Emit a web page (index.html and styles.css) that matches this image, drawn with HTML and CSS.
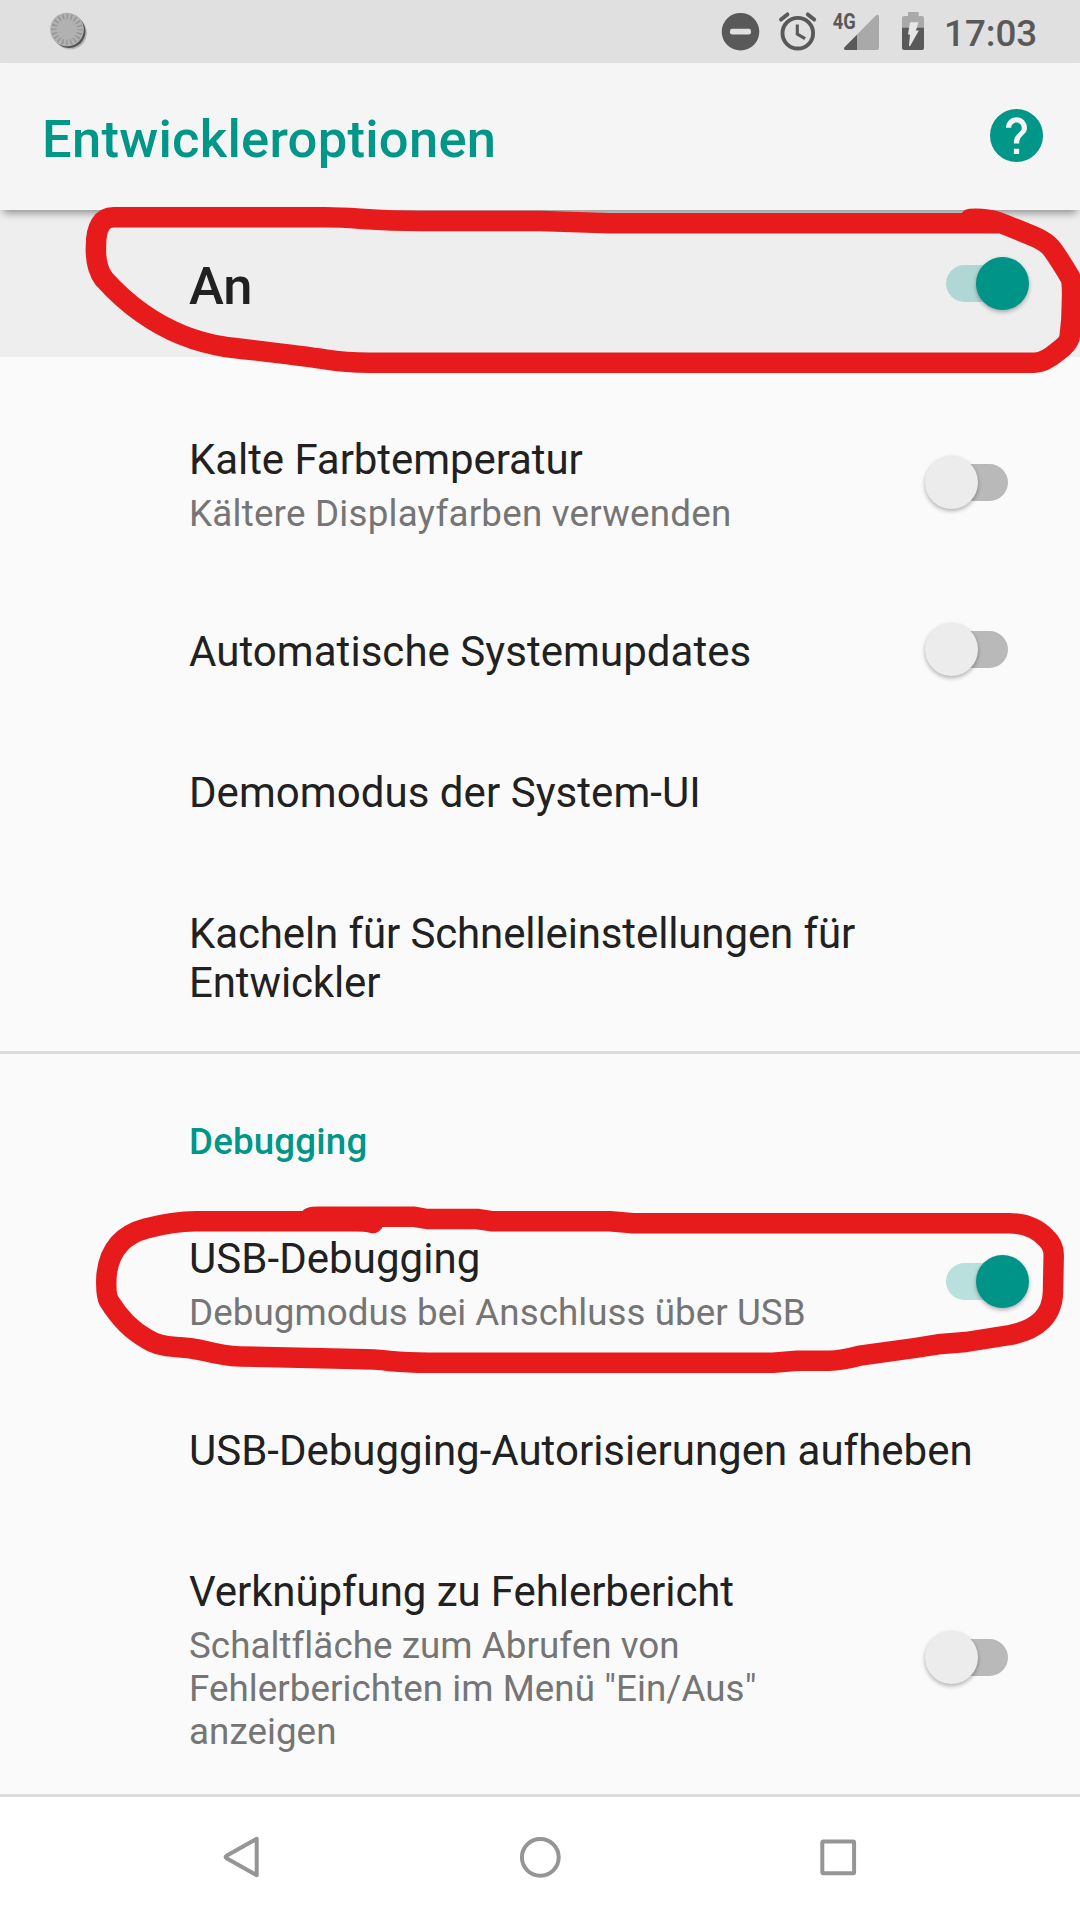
FILE: index.html
```html
<!DOCTYPE html>
<html lang="de">
<head>
<meta charset="utf-8">
<title>Entwickleroptionen</title>
<link rel="stylesheet" href="styles.css">
</head>
<body>
<div class="screen">
  <div class="status-bar">
    <svg class="app-icon" width="40" height="63" viewBox="46 0 40 63">
      <circle cx="67.500" cy="33" r="16.5" fill="#b9b9b9"/>
      <circle cx="66" cy="31.500" r="16.5" fill="#555"/>
      <circle cx="64" cy="29.500" r="16.8" fill="#b1b1b1"/>
      <circle cx="64" cy="29.500" r="13" fill="none" stroke="#959595" stroke-width="5.500" stroke-dasharray="1.4 2.684" stroke-dashoffset="0.7"/>
    </svg>
    <div class="status-icons">
      <svg width="48" height="63" viewBox="720 0 48 63">
        <circle cx="740.500" cy="31.700" r="18.8" fill="#595959"/>
        <rect x="730" y="28.800" width="21" height="5.600" rx="2.200" fill="#e0e0e0"/>
      </svg>
      <svg width="60" height="63" viewBox="768 0 60 63" fill="none" stroke="#595959" stroke-width="3.900">
        <circle cx="797.800" cy="33.200" r="15.300"/>
        <path d="M797.300 24.500V34l7.800 4.600" stroke-width="3.100"/>
        <path d="M781 19.600l6.400-5.200M814.200 19.600l-6.400-5.200" stroke-linecap="round"/>
      </svg>
      <svg width="68" height="63" viewBox="828 0 68 63">
        <path d="M844.800 47l31-31.400q3.200-2.200 3.200 1.400V48q0 2-2 2h-31q-3.400-.4-1.200-3z" fill="#a9a9a9"/>
        <path d="M844.800 47L857 34.700V50h-11q-3.400-.4-1.200-3z" fill="#595959"/>
        <text class="network" x="832.700" y="29.400" textLength="23" lengthAdjust="spacingAndGlyphs">4G</text>
      </svg>
      <svg width="40" height="63" viewBox="896 0 40 63">
        <path d="M908 12h10.600v4h3.400q2 0 2 2v10h-22V18q0-2 2-2h4z" fill="#a9a9a9"/>
        <path d="M902 27.700h22V48q0 2-2 2h-18q-2 0-2-2z" fill="#595959"/>
        <path d="M910 22.200h8.500l-2.600 8.300h3L910 46.200l-1-.3 1-11.300h-2z" fill="#e6e6e6"/>
      </svg>
    </div>
    <span class="clock">17:03</span>
  </div>

  <div class="toolbar">
    <h1 class="toolbar-title">Entwickleroptionen</h1>
    <svg class="help" width="63" height="63" viewBox="0 0 24 24">
      <circle cx="12" cy="12" r="10.100" fill="#009688"/>
      <path fill="#f5f5f5" d="M13 19h-2v-2h2v2zm2.070-7.750l-.9.920C13.450 12.900 13 13.500 13 15h-2v-.5c0-1.100.45-2.100 1.170-2.830l1.240-1.260c.37-.36.59-.86.59-1.410 0-1.100-.9-2-2-2s-2 .9-2 2H8c0-2.210 1.790-4 4-4s4 1.790 4 4c0 .88-.36 1.680-.93 2.250z"/>
    </svg>
  </div>

  <div class="switch-bar">
    <span class="switch-bar-label">An</span>
    <span class="switch on"><span class="thumb"></span></span>
  </div>

  <div class="list">
    <div class="row">
      <div class="text">
        <div class="title snug">Kalte Farbtemperatur</div>
        <div class="summary loose">Kältere Displayfarben verwenden</div>
      </div>
      <span class="switch"><span class="thumb"></span></span>
    </div>
    <div class="row">
      <div class="text"><div class="title roomy">Automatische Systemupdates</div></div>
      <span class="switch"><span class="thumb"></span></span>
    </div>
    <div class="row">
      <div class="text"><div class="title roomy">Demomodus der System-UI</div></div>
    </div>
    <div class="row last">
      <div class="text"><div class="title tight">Kacheln für Schnelleinstellungen für Entwickler</div></div>
    </div>
    <div class="category">Debugging</div>
    <div class="row">
      <div class="text">
        <div class="title roomy">USB-Debugging</div>
        <div class="summary roomy">Debugmodus bei Anschluss über USB</div>
      </div>
      <span class="switch on"><span class="thumb"></span></span>
    </div>
    <div class="row">
      <div class="text"><div class="title">USB-Debugging-Autorisierungen aufheben</div></div>
    </div>
    <div class="row">
      <div class="text">
        <div class="title snug">Verknüpfung zu Fehlerbericht</div>
        <div class="summary roomy">Schaltfläche zum Abrufen von Fehlerberichten im Menü "Ein/Aus" anzeigen</div>
      </div>
      <span class="switch"><span class="thumb"></span></span>
    </div>
  </div>

  <div class="nav-bar">
    <svg width="60" height="60" viewBox="0 0 60 60"><path d="M44.700 11.800v36.400L14.500 31.200q-1.800-1.200 0-2.400z"/></svg>
    <svg width="60" height="60" viewBox="0 0 60 60"><circle cx="30.300" cy="30.300" r="18.400"/></svg>
    <svg width="60" height="60" viewBox="0 0 60 60"><rect x="14.300" y="14.500" width="31.800" height="31.800" rx="1"/></svg>
  </div>

  <!-- marker strokes drawn over the two switches -->
  <svg class="marker" width="1080" height="1920" viewBox="0 0 1080 1920">
    <path d="M970 219Q985 218 998 222Q1016 229 1034 236.500Q1047 242 1052 249Q1060 260 1070 277Q1072.500 282 1072 300Q1072 320 1069.500 338Q1068 344 1057 352Q1044 363 1034 362.700H370Q345 362.700 326 359.500Q300 355.500 226 347Q180 340 142 313Q122 299 104 279Q95 267 96 246Q96 217 114 217.300H325Q340 217.300 360 218.800Q395 221 420 221H540L610 223.300H1000"/>
    <path d="M310 1218Q311 1216.700 320 1216.700H413L427 1219H477L493 1221.300H610L633 1223.300H1008Q1032 1223 1046 1238Q1054 1245 1053.700 1256L1053 1292Q1052 1327 1010 1335L966 1342L938 1344.300L915 1348L860 1355.700Q840 1361 828 1360.700H797L773 1362.700H435Q410 1363 390 1361Q375 1359 355 1359L240 1356.500Q225 1356 205 1351Q190 1347.500 176 1347Q157 1346 147 1339Q125 1327 109 1301Q105.500 1295 106.500 1276Q110 1238 146 1228.500Q176 1220.500 200 1221.300H355Q366 1221.300 373 1223"/>
  </svg>
</div>
</body>
</html>
```
FILE: styles.css
```css
* { box-sizing: border-box; }

body {
  margin: 0;
  font-family: Roboto, "Noto Sans", sans-serif;
  color: #212121;
}

.screen {
  position: relative;
  display: flex;
  flex-direction: column;
  width: 1080px;
  height: 1920px;
  overflow: hidden;
  background: #fafafa;
}

.status-bar {
  display: flex;
  flex: none;
  height: 63px;
  padding-left: 48.5px;
  background: #e0e0e0;
}

.status-icons {
  display: flex;
  margin-left: auto;
}

.network {
  font-size: 22px;
  font-weight: 700;
  fill: #595959;
}

.clock {
  width: 144px;
  padding-left: 8px;
  font-size: 36.75px;
  font-weight: 500;
  line-height: 67px;
  color: #595959;
}

.toolbar {
  z-index: 1;
  display: flex;
  flex: none;
  align-items: center;
  justify-content: space-between;
  height: 147px;
  padding: 0 32px 0 42px;
  background: #f5f5f5;
  box-shadow: 0 6px 8px -3px rgba(0, 0, 0, 0.4);
}

.toolbar-title {
  margin: 0;
  padding-top: 4px;
  font-size: 52.5px;
  font-weight: 500;
  letter-spacing: 0.27px;
  color: #009688;
}

.help {
  display: block;
  margin-bottom: 2px;
}

.switch-bar {
  display: flex;
  flex: none;
  align-items: center;
  justify-content: space-between;
  height: 147px;
  padding: 0 51px 0 189px;
  background: #eeeeee;
}

.switch-bar-label {
  padding-top: 4px;
  font-size: 52.5px;
  font-weight: 500;
}

.list {
  flex: 1;
  min-height: 0;
  padding-top: 30px;
  overflow: hidden;
}

.row {
  display: flex;
  align-items: center;
  justify-content: space-between;
  padding: 0 51px 0 189px;
}

.text {
  max-width: 700px;
  padding: 48px 0 44px;
}

.text:only-child { max-width: 840px; }

.last { border-bottom: 3px solid #dcdcdc; }

.last .text:only-child { max-width: 700px; }

.title {
  font-size: 42px;
  line-height: 49px;
}

.summary {
  max-width: 640px;
  margin-top: 8px;
  font-size: 36.75px;
  line-height: 43px;
  color: #757575;
}

.tight { letter-spacing: -0.12px; }
.snug { letter-spacing: -0.07px; }
.roomy { letter-spacing: 0.05px; }
.loose { letter-spacing: 0.22px; }

.category {
  height: 132px;
  padding: 66px 0 0 189px;
  font-size: 36.75px;
  font-weight: 500;
  line-height: 43px;
  letter-spacing: 0.15px;
  color: #009688;
}

.switch {
  position: relative;
  display: flex;
  flex: none;
  align-items: center;
  width: 104px;
  height: 53px;
}

.row .switch { margin-bottom: 1px; }

.switch::before {
  content: "";
  position: absolute;
  left: 21px;
  top: 8px;
  width: 62px;
  height: 37px;
  border-radius: 19px;
  background: #b9b9b9;
}

.thumb {
  position: relative;
  width: 53px;
  height: 53px;
  border-radius: 50%;
  background: #ececec;
  box-shadow: 0 2px 4px rgba(0, 0, 0, 0.3);
}

.switch.on { justify-content: flex-end; }
.switch.on::before { background: rgba(0, 150, 136, 0.26); }
.switch.on .thumb { background: #009387; }

.nav-bar {
  display: flex;
  flex: none;
  justify-content: space-between;
  height: 126px;
  padding: 30px 212px 0;
  border-top: 3px solid #dcdcdc;
  background: #ffffff;
}

.nav-bar svg {
  fill: none;
  stroke: #959595;
  stroke-width: 4;
  stroke-linejoin: round;
}

.marker {
  position: absolute;
  inset: 0;
  z-index: 2;
  fill: none;
  stroke: #e71b1c;
  stroke-width: 20.5px;
  stroke-linecap: round;
  stroke-linejoin: round;
}
```
